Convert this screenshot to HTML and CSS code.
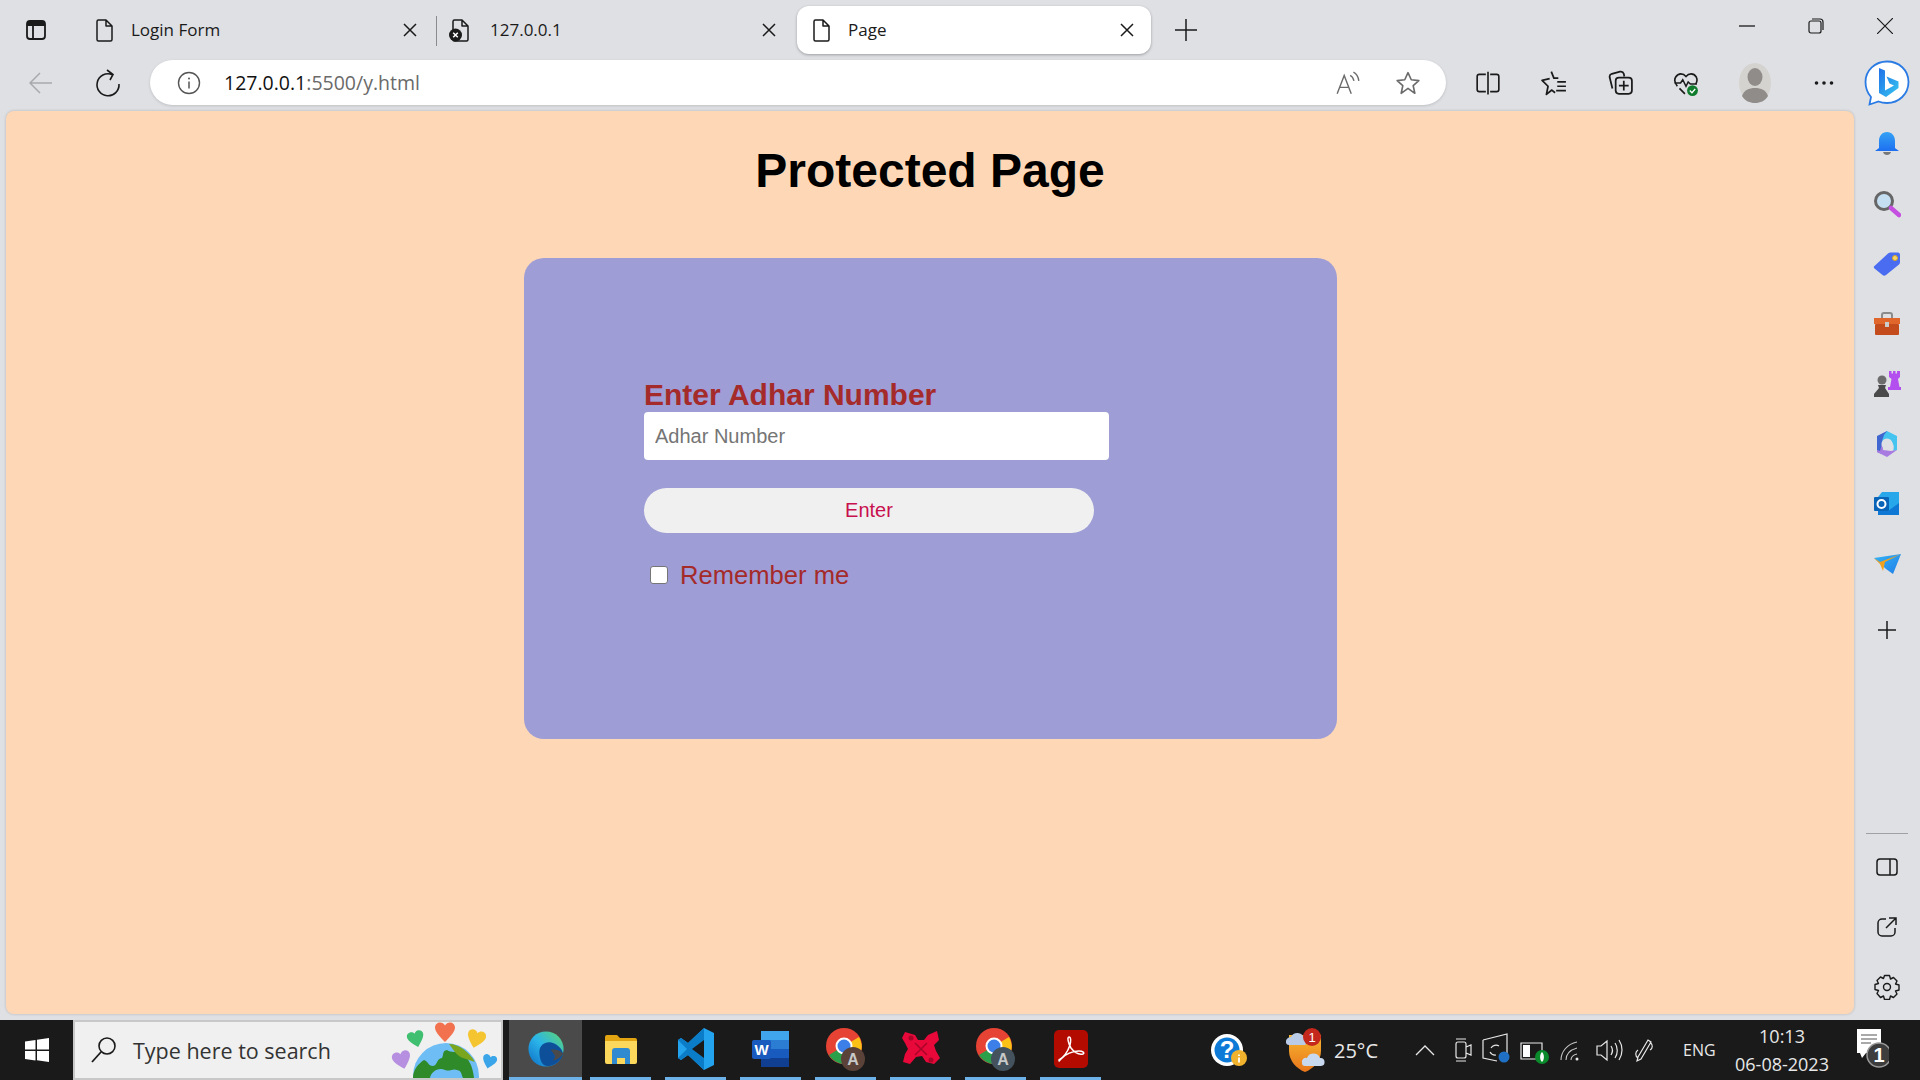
FILE: index.html
```html
<!DOCTYPE html>
<html lang="en">
<head>
    <meta charset="UTF-8">
    <title>Page</title>
    <link rel="stylesheet" href="styles.css">
</head>
<body>
    <svg class="defs" width="0" height="0">
        <defs>
            <symbol id="file" viewBox="0 0 24 24"><path d="M5 3.500A1.500 1.500 0 0 1 6.500 2H14l6 6v13.500a1.500 1.500 0 0 1-1.500 1.500h-12A1.500 1.500 0 0 1 5 21.500zM14 2v6h6" fill="none" stroke="#1a1a1a" stroke-width="1.500" stroke-linejoin="round"/></symbol>
            <symbol id="close" viewBox="0 0 16 16"><path d="M2 2l12 12M14 2L2 14" fill="none" stroke="#1a1a1a" stroke-width="1.500"/></symbol>
            <symbol id="heart" viewBox="0 0 24 24"><path d="M12 22C5 15 2 11 2 7.500 2 4.500 4.500 2.500 7 2.500c2 0 4 1 5 3 1-2 3-3 5-3 2.500 0 5 2 5 5 0 3.500-3 7.500-10 14.500z"/></symbol>
            <linearGradient id="edgeGrad" x1="0" y1="1" x2="1" y2="0"><stop offset="0" stop-color="#0c6cc4"/><stop offset=".5" stop-color="#2bb5ea"/><stop offset="1" stop-color="#5fd66a"/></linearGradient>
            <linearGradient id="bingGrad" x1="0" y1="0" x2="1" y2="1"><stop offset="0" stop-color="#1f6fe8"/><stop offset="1" stop-color="#37c8f0"/></linearGradient>
            <linearGradient id="bellGrad" x1="0" y1="0" x2="0" y2="1"><stop offset="0" stop-color="#35a2f5"/><stop offset="1" stop-color="#1d6ff0"/></linearGradient>
            <linearGradient id="planeGrad" x1="0" y1="0" x2="1" y2="1"><stop offset="0" stop-color="#35b5f5"/><stop offset="1" stop-color="#1f7de8"/></linearGradient>
            <linearGradient id="shieldGrad" x1="0" y1="0" x2="0" y2="1"><stop offset="0" stop-color="#f7b531"/><stop offset="1" stop-color="#e8751a"/></linearGradient>
        </defs>
    </svg>

    <div class="tabbar">
        <div class="win-btn">
            <svg width="24" height="24" viewBox="0 0 24 24"><rect x="3" y="3" width="18" height="18" rx="3" fill="none" stroke="#1a1a1a" stroke-width="1.800"/><path d="M3 6a3 3 0 0 1 3-3h12a3 3 0 0 1 3 3v2H3z" fill="#1a1a1a"/><path d="M9 8v13" stroke="#1a1a1a" stroke-width="1.800"/></svg>
        </div>
        <div class="tab tab-first">
            <svg class="tab-icon"><use href="#file"/></svg>
            <span class="tab-title">Login Form</span>
            <svg class="tab-close"><use href="#close"/></svg>
        </div>
        <div class="tab tab-second">
            <svg class="tab-icon" viewBox="0 0 24 24"><use href="#file" width="24" height="24"/><circle cx="7.500" cy="17" r="6.500" fill="#1a1a1a"/><path d="M5.200 14.700l4.600 4.600M9.800 14.700l-4.600 4.600" stroke="#fff" stroke-width="1.500"/></svg>
            <span class="tab-title">127.0.0.1</span>
            <svg class="tab-close"><use href="#close"/></svg>
        </div>
        <div class="tab tab-active">
            <svg class="tab-icon"><use href="#file"/></svg>
            <span class="tab-title">Page</span>
            <svg class="tab-close"><use href="#close"/></svg>
        </div>
        <svg class="new-tab" width="24" height="24" viewBox="0 0 24 24"><path d="M12 1v22M1 12h22" stroke="#1a1a1a" stroke-width="1.500"/></svg>
        <div class="win-controls">
            <svg width="16" height="16" viewBox="0 0 16 16"><path d="M0 8h16" stroke="#1a1a1a" stroke-width="1.300"/></svg>
            <svg width="16" height="16" viewBox="0 0 16 16"><rect x="1" y="3" width="12" height="12" rx="2" fill="none" stroke="#1a1a1a" stroke-width="1.200"/><path d="M4 1h8a3 3 0 0 1 3 3v8" fill="none" stroke="#1a1a1a" stroke-width="1.200"/></svg>
            <svg width="16" height="16" viewBox="0 0 16 16"><path d="M0 0l16 16M16 0L0 16" stroke="#1a1a1a" stroke-width="1.200"/></svg>
        </div>
    </div>

    <div class="toolbar">
        <svg class="back" width="24" height="24" viewBox="0 0 24 24"><path d="M23 12H1M11 2L1 12l10 10" fill="none" stroke="#a8a9ad" stroke-width="1.500"/></svg>
        <svg class="reload" width="26" height="28" viewBox="0 0 26 28"><path d="M17 5.500A11 11 0 1 0 24 15M12 1l6 4.500-3 5.500" fill="none" stroke="#1a1a1a" stroke-width="1.600"/></svg>
        <div class="address">
            <svg class="info" width="24" height="24" viewBox="0 0 24 24"><circle cx="12" cy="12" r="10.500" fill="none" stroke="#555" stroke-width="1.400"/><path d="M12 10.500v7" stroke="#555" stroke-width="1.500"/><circle cx="12" cy="7.500" r="1" fill="#555"/></svg>
            <span class="url"><b>127.0.0.1</b>:5500/y.html</span>
            <div class="addr-right">
                <svg width="26" height="26" viewBox="0 0 24 24"><path d="M2 22L8.500 5l6.500 17M4.500 16h8M14 5c2 1 3 3 3.500 5M17 2c3 1.500 4.500 4.500 5 8" fill="none" stroke="#6b6b6b" stroke-width="1.300"/></svg>
                <svg width="26" height="26" viewBox="0 0 24 24"><path d="M12 2.500l3 6.500 7 .8-5.200 4.700 1.500 7L12 17l-6.300 4.500 1.500-7L2 9.800 9 9z" fill="none" stroke="#6b6b6b" stroke-width="1.500" stroke-linejoin="round"/></svg>
            </div>
        </div>
        <div class="tool-icons">
            <div class="tool"><svg width="26" height="26" viewBox="0 0 24 24"><path d="M10 4H4a2 2 0 0 0-2 2v12a2 2 0 0 0 2 2h6M14 4h6a2 2 0 0 1 2 2v12a2 2 0 0 1-2 2h-6M12 1.500v21" fill="none" stroke="#1a1a1a" stroke-width="1.500"/></svg></div>
            <div class="tool"><svg width="26" height="26" viewBox="0 0 24 24"><path d="M9.500 1.500l2.400 6h4.100M13 21l-3-2.500-5 4 1.500-7.500L1 9.500l7-1.500" fill="none" stroke="#1a1a1a" stroke-width="1.600" stroke-linejoin="round"/><path d="M15 11h8M15 15h8M14 19h9" stroke="#1a1a1a" stroke-width="1.600"/></svg></div>
            <div class="tool"><svg width="26" height="26" viewBox="0 0 24 24"><path d="M5 17L2.500 7a3 3 0 0 1 2-3.500L12 1.500a3 3 0 0 1 3.500 2L16 6" fill="none" stroke="#1a1a1a" stroke-width="1.600"/><rect x="8" y="7" width="15" height="15" rx="3" fill="none" stroke="#1a1a1a" stroke-width="1.600"/><path d="M15.500 10v9M11 14.500h9" stroke="#1a1a1a" stroke-width="1.600"/></svg></div>
            <div class="tool"><svg width="26" height="26" viewBox="0 0 24 24"><path d="M4 15C1.500 12 1 9 2.500 6.500 5 2.500 9.500 3 12 6c2.500-3 7-3.500 9.500.5 1 2 1 4-.5 6.500M6 17l5 5" fill="none" stroke="#1a1a1a" stroke-width="1.500"/><path d="M1.500 12H7l2-3 3 6 2-4 2 2h6" fill="none" stroke="#1a1a1a" stroke-width="1.400"/><circle cx="18" cy="19" r="5" fill="#0f7b2c"/><path d="M15.500 19l2 2 3-3.500" fill="none" stroke="#fff" stroke-width="1.200"/></svg></div>
            <div class="tool tool-avatar"><svg width="32" height="40" viewBox="0 0 32 40"><ellipse cx="16" cy="20" rx="16" ry="20" fill="#d5d3d0"/><ellipse cx="16" cy="14" rx="7.500" ry="9" fill="#8f8c89"/><path d="M3 33c2-6 7-8 13-8s11 2 13 8c-3 5-8 7-13 7S6 38 3 33z" fill="#8f8c89"/></svg></div>
            <div class="tool"><svg width="20" height="6" viewBox="0 0 20 6"><circle cx="2.500" cy="3" r="1.800" fill="#1a1a1a"/><circle cx="10" cy="3" r="1.800" fill="#1a1a1a"/><circle cx="17.500" cy="3" r="1.800" fill="#1a1a1a"/></svg></div>
            <div class="tool tool-bing"><svg width="46" height="46" viewBox="0 0 46 46"><path d="M23 1.500C11 1.500 1.500 10.500 1.500 22c0 6 2 11 5.500 15l-1.500 7.500 9-3c2.500 1 5.500 1.500 8.500 1.500 12 0 21.500-9 21.500-21S35 1.500 23 1.500z" fill="#fff" stroke="#2a7be4" stroke-width="1.800"/><path d="M15 8l6 2.500v20l9-5-4.500-2-3-7 12 5v6.500L22 37l-7-4z" fill="url(#bingGrad)"/></svg></div>
        </div>
    </div>

    <div class="workspace">
        <main class="page">
            <h1>Protected Page</h1>
            <div class="card">
                <form class="form">
                    <label class="form-label" for="adhar">Enter Adhar Number</label>
                    <input class="form-input" id="adhar" type="text" placeholder="Adhar Number">
                    <button class="form-btn" type="button">Enter</button>
                    <div class="remember">
                        <input class="remember-check" id="remember" type="checkbox">
                        <label class="remember-label" for="remember">Remember me</label>
                    </div>
                </form>
            </div>
        </main>
        <aside class="sidebar">
            <div class="side-top">
                <div class="side-item"><svg width="28" height="28" viewBox="0 0 28 28"><path d="M14 2c5 0 8 4 8 9v7l4 3H2l4-3v-7c0-5 3-9 8-9z" fill="url(#bellGrad)"/><path d="M10 22h8c-1 4-7 4-8 0z" fill="#777"/></svg></div>
                <div class="side-item"><svg width="28" height="28" viewBox="0 0 28 28"><circle cx="11" cy="11" r="8.500" fill="#c5dff2" stroke="#666" stroke-width="3"/><path d="M18 18l8 7" stroke="#c54fe0" stroke-width="4.500" stroke-linecap="round"/></svg></div>
                <div class="side-item"><svg width="28" height="26" viewBox="0 0 28 26"><path d="M1.500 15L15 2.500c1-1 2-1 3-1h7c1 0 2 1 2 2v7c0 1 0 2-1 3L13 24c-1 1-2.500 1-3.500 0l-8-6.500c-1-1-1-2 0-2.500z" fill="#4a6cf0"/><circle cx="22" cy="7" r="2.500" fill="#f5d76e" stroke="#d8a520" stroke-width="1"/></svg></div>
                <div class="side-item"><svg width="28" height="24" viewBox="0 0 28 24"><path d="M9 6V3a2 2 0 0 1 2-2h6a2 2 0 0 1 2 2v3" fill="none" stroke="#8b8b8b" stroke-width="2"/><rect x="1" y="6" width="26" height="6" fill="#e0662c"/><rect x="2" y="12" width="24" height="11" rx="1" fill="#c44b1c"/><rect x="12" y="10" width="4" height="5" fill="#ccc"/></svg></div>
                <div class="side-item"><svg width="28" height="28" viewBox="0 0 28 28"><path d="M16 1h2.500v2.500H20V1h2.500v2.500H24V1h3v6l-2 2 1.500 8h2v3H15v-3h2l1.500-8-2.500-2z" fill="#b44fef"/><circle cx="9" cy="10" r="4.500" fill="#6c6c6c"/><path d="M5 15h8l-1 3 4 6v3H1v-3l5-6z" fill="#4a4a4a"/></svg></div>
                <div class="side-item"><svg width="26" height="28" viewBox="0 0 26 28"><path d="M13 1L3 6v16l5 2 1-12c0-4 2-6 4-6z" fill="#3f67cf"/><path d="M13 1l10 5v14l-4 1c2-5 0-10-6-12L8 11l2-6z" fill="#45c4f0"/><path d="M8 14l1 6 8 1 6-1-10 7-10-5v-2l3 1z" fill="#a87be0"/><path d="M13 8.500a5.500 5.500 0 1 1-.01 0z" fill="#dfe0e4"/></svg></div>
                <div class="side-item"><svg width="26" height="26" viewBox="0 0 26 26"><path d="M8 1h17v23H4V6z" fill="#28a8ea"/><path d="M4 14l10 6 11-8v12H4z" fill="#0f78d4"/><rect x="0" y="6" width="15" height="14" rx="1" fill="#0a64b8"/><circle cx="7.500" cy="13" r="4" fill="none" stroke="#fff" stroke-width="2"/></svg></div>
                <div class="side-item"><svg width="28" height="22" viewBox="0 0 28 22"><path d="M1 5l27-4-8 20-7-5z" fill="url(#planeGrad)"/><path d="M1 5l6 4 21-8-16 8-2 9-3-7z" fill="#f0a21e"/></svg></div>
                <div class="side-item side-plus"><svg width="20" height="20" viewBox="0 0 20 20"><path d="M10 1v18M1 10h18" stroke="#1a1a1a" stroke-width="1.500"/></svg></div>
            </div>
            <div class="side-bottom">
                <div class="side-divider"></div>
                <div class="side-item"><svg width="24" height="24" viewBox="0 0 24 24"><rect x="2" y="4" width="20" height="16" rx="3" fill="none" stroke="#1a1a1a" stroke-width="1.500"/><path d="M15 4v16" stroke="#1a1a1a" stroke-width="1.500"/></svg></div>
                <div class="side-item"><svg width="24" height="24" viewBox="0 0 24 24"><path d="M11 4H7a4 4 0 0 0-4 4v9a4 4 0 0 0 4 4h9a4 4 0 0 0 4-4v-4M14 3h7v7M21 3L11 13" fill="none" stroke="#1a1a1a" stroke-width="1.500"/></svg></div>
                <div class="side-item"><svg width="26" height="26" viewBox="0 0 26 26"><path d="M10.500 1.500h5l1 3.500 3-1.500 3.500 3.500-1.500 3 3.500 1v5l-3.500 1 1.500 3-3.500 3.500-3-1.500-1 3.500h-5l-1-3.500-3 1.500L3 19.500l1.500-3-3.500-1v-5l3.500-1-1.500-3L6.500 3l3 1.500z" fill="none" stroke="#1a1a1a" stroke-width="1.400" stroke-linejoin="round"/><circle cx="13" cy="13" r="3.500" fill="none" stroke="#1a1a1a" stroke-width="1.400"/></svg></div>
            </div>
        </aside>
    </div>

    <footer class="taskbar">
        <div class="start"><svg width="26" height="26" viewBox="0 0 26 26"><path d="M1 4.500l10.500-1.500v9.500H1zM13 2.800L25 1v11.500H13zM1 14h10.500v9.500L1 22zM13 14h12v11l-12-1.800z" fill="#fff"/></svg></div>
        <div class="search">
            <svg width="26" height="28" viewBox="0 0 26 28"><circle cx="16" cy="10" r="8" fill="none" stroke="#1a1a1a" stroke-width="1.600"/><path d="M10 16L1 26" stroke="#1a1a1a" stroke-width="1.800"/></svg>
            <span class="search-text">Type here to search</span>
            <svg class="search-art" width="110" height="56" viewBox="0 2 110 56">
                <use href="#heart" x="42" y="0" width="24" height="24" fill="#f2724f"/>
                <use href="#heart" x="15" y="9" width="20" height="20" fill="#3fbf6f" transform="rotate(-15 25 19)"/>
                <use href="#heart" x="74" y="8" width="22" height="22" fill="#f5c531" transform="rotate(15 85 19)"/>
                <use href="#heart" x="0" y="28" width="22" height="24" fill="#b78fe0" transform="rotate(-15 11 40)"/>
                <use href="#heart" x="90" y="33" width="17" height="17" fill="#3aa5e8" transform="rotate(15 98 41)"/>
                <circle cx="55" cy="56" r="33" fill="#6fbdf5"/>
                <path d="M22 58c0-8 5-14 11-18 5 2 4 6 9 6 5-1 3-7 9-8 2-4 0-7 5-8 4 3 10 1 14 3 8 5 12 14 13 25H72c-2-4-1-7-6-8-4-2-7 2-12 0-7-3-14 2-15 8z" fill="#2f8a2a"/>
                <path d="M58 24c10 0 20 8 26 18l-12-4c-6-2-8-6-14-14z" fill="#7aa51e"/>
            </svg>
        </div>
        <div class="apps">
            <div class="app app-current"><svg width="38" height="38" viewBox="0 0 40 40"><circle cx="20" cy="20" r="18.500" fill="url(#edgeGrad)"/><path d="M13 23c0-8 8-12 15-9 5 2 9 6 10 11-2 8-9 13-17 13-6 0-8-9-8-15z" fill="#0e4f9a"/><path d="M25 21c4-1 9 0 13 4-3 4-7 7-11 7 3-2 3-5 1-7-1-2-2-3-3-4z" fill="#4a4a4a"/></svg></div>
            <div class="app"><svg width="34" height="32" viewBox="0 0 34 32"><path d="M1 4a2 2 0 0 1 2-2h10l3 3h15a2 2 0 0 1 2 2v3H1z" fill="#e2a410"/><path d="M1 8h32v21a2 2 0 0 1-2 2H3a2 2 0 0 1-2-2z" fill="#fbd75c"/><path d="M8 31V18a3 3 0 0 1 3-3h12a3 3 0 0 1 3 3v13h-5v-6h-8v6z" fill="#2f8ad0"/></svg></div>
            <div class="app"><svg width="36" height="44" viewBox="0 0 36 44"><path d="M26 1l10 5v32l-10 5-16-15-7 5-3-2V13l3-2 7 5z" fill="#23a3ee"/><path d="M26 1v42L10 28l-7 5-3-2 9-9-9-9 3-2 7 5z" fill="#0b7cc8"/><path d="M26 13L14 22l12 9z" fill="#1a1a1a"/></svg></div>
            <div class="app"><svg width="38" height="38" viewBox="0 0 38 38"><rect x="9" y="1" width="28" height="36" rx="2" fill="#2b7cd3"/><rect x="9" y="1" width="28" height="9" fill="#41a5ee"/><rect x="9" y="19" width="28" height="9" fill="#185abd"/><rect x="9" y="28" width="28" height="9" fill="#103f91"/><rect x="0" y="10" width="19" height="19" rx="2" fill="#185abd"/><text class="app-letter" x="9.500" y="25" text-anchor="middle">W</text></svg></div>
            <div class="app"><svg width="40" height="48" viewBox="0 0 40 48"><circle cx="18" cy="21" r="18" fill="#e74335"/><path d="M18 21L3 30a18 18 0 0 0 21 8z" fill="#2b9f4a"/><path d="M18 21l15-9a18 18 0 0 1-8 26z" fill="#fbc116"/><circle cx="18" cy="21" r="8.500" fill="#fff"/><circle cx="18" cy="21" r="6.500" fill="#3c7fe8"/><circle cx="27" cy="34" r="12" fill="#5a4238"/><text class="app-badge" x="27" y="40" text-anchor="middle">A</text></svg></div>
            <div class="app"><svg width="38" height="40" viewBox="0 0 38 40"><path d="M3 3l10 3 3 5 6 0 4-5 9-4 2 9-5 5 2 6 4 7-6 6-8-2-4-6-6 1-6 7-7-2 2-8 3-5-3-6-3-5z" fill="#e8083a"/><path d="M13 14l12 12M25 14L13 26" stroke="#a80528" stroke-width="1.500"/><circle cx="9" cy="9" r="2.500" fill="#a80528"/><circle cx="29" cy="31" r="2.500" fill="#a80528"/></svg></div>
            <div class="app"><svg width="40" height="48" viewBox="0 0 40 48"><circle cx="18" cy="21" r="18" fill="#e74335"/><path d="M18 21L3 30a18 18 0 0 0 21 8z" fill="#2b9f4a"/><path d="M18 21l15-9a18 18 0 0 1-8 26z" fill="#fbc116"/><circle cx="18" cy="21" r="8.500" fill="#fff"/><circle cx="18" cy="21" r="6.500" fill="#3c7fe8"/><circle cx="27" cy="34" r="12" fill="#43525c"/><text class="app-badge" x="27" y="40" text-anchor="middle">A</text></svg></div>
            <div class="app"><svg width="34" height="38" viewBox="0 0 34 38"><rect width="34" height="38" rx="5" fill="#b30b00"/><path d="M5 30c5-3 9-9 11-15 1-4 1-8-1-8s-1 6 2 11c3 4 7 7 12 6 2-1 0-3-4-3-6 0-14 3-18 8-2 2-2 3-2 1z" fill="none" stroke="#fff" stroke-width="1.500"/></svg></div>
        </div>
        <div class="help"><svg width="40" height="42" viewBox="0 0 40 42"><circle cx="17" cy="21" r="16" fill="#fff"/><circle cx="17" cy="21" r="12.500" fill="#0d7ad8"/><text class="help-mark" x="17" y="29" text-anchor="middle">?</text><circle cx="29" cy="29" r="8" fill="#f1b32e"/><path d="M29 25.500v1.500M29 28.500v5" stroke="#fff" stroke-width="1.800"/></svg></div>
        <div class="weather"><svg width="42" height="46" viewBox="0 0 42 46"><path d="M3 8h32v16c0 10-8 18-16 21C11 42 3 34 3 24z" fill="url(#shieldGrad)"/><path d="M0 16a5 5 0 0 1 5-6 7 7 0 0 1 13 1 4 4 0 0 1 1 7H3a3 3 0 0 1-3-2z" fill="#b9cbe6"/><path d="M16 36a4 4 0 0 1 5-5 7 7 0 0 1 13 0 4 4 0 0 1 1 8H19a3 3 0 0 1-3-3z" fill="#c8d8ef"/><circle cx="26" cy="10" r="9" fill="#c4281c"/><text class="weather-count" x="26" y="15" text-anchor="middle">1</text></svg></div>
        <span class="temp">25°C</span>
        <svg class="tray" width="253" height="60" viewBox="0 0 253 60">
            <path d="M4 35l9-9 9 9" fill="none" stroke="#e8e8e8" stroke-width="1.300"/>
            <path d="M44 24v12a2 2 0 0 0 2 2h6a2 2 0 0 0 2-2V24a2 2 0 0 0-2-2h-6a2 2 0 0 0-2 2zM54 27l5-2v10l-5-2M44 19h10M44 41h10" fill="none" stroke="#e8e8e8" stroke-width="1.200"/>
            <path d="M71 20l24-6v21h-6M71 20v18l14 3M79 28a6 6 0 0 1 8-2M84 35a6 6 0 0 1-6-3" fill="none" stroke="#e8e8e8" stroke-width="1.200"/>
            <circle cx="92" cy="37" r="5.500" fill="#1f6fc4"/>
            <path d="M109 23h21v16h-21z" fill="none" stroke="#e8e8e8" stroke-width="1.200"/>
            <rect x="111" y="25" width="7" height="12" fill="#fff"/>
            <circle cx="130" cy="37" r="7" fill="#0a8a2a"/>
            <path d="M130 32c2.500 2 2.500 8 0 10-2.500-2-2.500-8 0-10z" fill="#fff"/>
            <path d="M149 40c0-8 6-16 16-18M154 40c0-6 4-10 11-12M159 40c0-3 2-5 6-6" fill="none" stroke="#c8c8c8" stroke-width="1.100"/>
            <circle cx="165" cy="39" r="1.500" fill="#e8e8e8"/>
            <path d="M185 26h4l6-5v19l-6-5h-4zM199 26c2 3 2 6 0 9M203 23c3 4 3 11 0 15M207 20c4 6 4 14 0 20" fill="none" stroke="#e8e8e8" stroke-width="1.200"/>
            <path d="M227 40l-2 1 1-4 10-17 3 2-10 17zM238 22c3 3 3 6 0 8M226 30c-3 2-3 6 0 8" fill="none" stroke="#e8e8e8" stroke-width="1.200"/>
        </svg>
        <span class="lang">ENG</span>
        <div class="clock"><span>10:13</span><span>06-08-2023</span></div>
        <div class="notify"><svg width="40" height="48" viewBox="0 0 40 48"><path d="M8 3h24v24h-15l-4 5-2-5H8z" fill="#fff"/><path d="M12 9h16M12 13h16M12 17h10" stroke="#555" stroke-width="1.200"/><circle cx="30" cy="29" r="12" fill="#3d3d3d" stroke="#9a9a9a" stroke-width="1.500"/><text class="notify-count" x="30" y="36" text-anchor="middle">1</text></svg></div>
    </footer>
</body>
</html>
```

FILE: styles.css
```css
*{
    margin: 0;
    padding: 0;
    box-sizing: border-box;
}
body{
    display: flex;
    flex-direction: column;
    width: 1920px;
    height: 1080px;
    overflow: hidden;
    background: #dfe0e4;
    font-family: "Open Sans", "Liberation Sans", sans-serif;
    color: #1a1a1a;
}
.defs{
    position: absolute;
}

/* tabs */
.tabbar{
    display: flex;
    align-items: center;
    height: 60px;
    flex-shrink: 0;
}
.win-btn{
    display: flex;
    justify-content: center;
    align-items: center;
    width: 72px;
    height: 48px;
    margin-right: 8px;
}
.tab{
    display: flex;
    align-items: center;
    gap: 15px;
    width: 354px;
    height: 48px;
    padding: 0 16px 0 12px;
    font-size: 17px;
}
.tab-first{
    width: 356px;
    padding-right: 18px;
}
.tab-second{
    gap: 18px;
    padding-right: 13px;
    margin-right: 7px;
    position: relative;
}
.tab-second::before{
    content: "";
    position: absolute;
    left: 0;
    top: 10px;
    width: 1px;
    height: 30px;
    background: #8a8b8f;
}
.tab-active{
    background: #fff;
    border-radius: 12px;
    box-shadow: 0 1px 3px rgba(0, 0, 0, .3);
}
.tab-icon{
    width: 24px;
    height: 24px;
    flex-shrink: 0;
}
.tab-title{
    flex: 1;
    padding-bottom: 2px;
}
.tab-close{
    width: 16px;
    height: 16px;
    flex-shrink: 0;
}
.new-tab{
    margin-left: 23px;
}
.win-controls{
    display: flex;
    gap: 53px;
    margin-left: auto;
    margin-right: 27px;
    margin-top: -8px;
}

/* address row */
.toolbar{
    display: flex;
    align-items: center;
    height: 51px;
    padding-bottom: 6px;
    flex-shrink: 0;
}
.back{
    margin-left: 29px;
}
.reload{
    margin-left: 42px;
}
.address{
    display: flex;
    align-items: center;
    width: 1296px;
    height: 45px;
    margin-left: 29px;
    padding: 0 25px 0 27px;
    background: #fff;
    border-radius: 23px;
    box-shadow: 0 1px 3px rgba(0, 0, 0, .15);
}
.url{
    margin-left: 23px;
    font-size: 19.500px;
    color: #6a6a6a;
}
.url b{
    font-weight: 400;
    color: #111;
}
.addr-right{
    display: flex;
    gap: 34px;
    margin-left: auto;
}
.tool-icons{
    display: flex;
    align-items: center;
    margin-left: 9px;
}
.tool{
    display: flex;
    justify-content: center;
    align-items: center;
    width: 66px;
    height: 45px;
}
.tool-avatar{
    width: 72px;
}
.tool-bing{
    width: 60px;
}

/* page */
.workspace{
    display: flex;
    flex: 1;
    min-height: 0;
}
.page{
    width: 1848px;
    margin: 0 0 6px 6px;
    background: #fed8b6;
    border-radius: 8px;
    box-shadow: 0 0 3px rgba(0, 0, 0, .2);
}
h1{
    margin: 32px 0 60px;
    font-family: "Liberation Sans", Arial, sans-serif;
    font-size: 48px;
    line-height: 55px;
    font-weight: 700;
    text-align: center;
    color: #000;
}
.card{
    width: 813px;
    height: 481px;
    margin-left: 518px;
    padding: 120px 0 0 120px;
    background: #9e9dd6;
    border-radius: 20px;
}
.form{
    font-family: "Liberation Sans", Arial, sans-serif;
}
.form-label{
    display: block;
    font-size: 30px;
    line-height: 34px;
    font-weight: 700;
    color: #a52a2a;
}
.form-input{
    display: block;
    width: 465px;
    height: 48px;
    padding: 0 11px;
    border: none;
    border-radius: 4px;
    background: #fff;
    font-family: inherit;
    font-size: 20px;
}
.form-input::placeholder{
    color: #757575;
}
.form-btn{
    display: block;
    width: 450px;
    height: 45px;
    margin-top: 28px;
    border: none;
    border-radius: 23px;
    background: #f0f0f0;
    font-family: inherit;
    font-size: 20px;
    color: #c8104e;
}
.remember{
    display: flex;
    align-items: center;
    gap: 12px;
    margin: 26px 0 0 6px;
    font-size: 25.600px;
    line-height: 30px;
    color: #a52a2a;
}
.remember-check{
    appearance: none;
    width: 18px;
    height: 18px;
    margin: 0;
    background: #fff;
    border: 1.500px solid #767676;
    border-radius: 3px;
}
.remember-label{
    padding-top: 1px;
}

/* right rail */
.sidebar{
    display: flex;
    flex-direction: column;
    justify-content: space-between;
    width: 66px;
    padding: 3px 0;
}
.side-item{
    display: flex;
    justify-content: center;
    align-items: center;
    height: 60px;
}
.side-plus{
    margin-top: 6px;
}
.side-divider{
    width: 42px;
    height: 1px;
    margin: 0 0 3px 12px;
    background: #a0a1a5;
}

/* windows taskbar */
.taskbar{
    display: flex;
    align-items: center;
    height: 60px;
    flex-shrink: 0;
    background: #1a1a1a;
    color: #e8e8e8;
}
.start{
    display: flex;
    justify-content: center;
    align-items: center;
    width: 73px;
}
.search{
    display: flex;
    align-items: center;
    width: 430px;
    height: 60px;
    padding-left: 16px;
    border: 2px solid #c8c8c8;
    background: #f0f0f0;
    overflow: hidden;
}
.search-text{
    margin-left: 16px;
    font-size: 21.500px;
    color: #333;
}
.search-art{
    margin-left: auto;
    flex-shrink: 0;
}
.apps{
    display: flex;
    gap: 14px;
    margin-left: 6px;
}
.app{
    display: flex;
    justify-content: center;
    align-items: center;
    width: 61px;
    height: 60px;
    padding-top: 1px;
    border-bottom: 3px solid #6cb2e8;
}
.app-current{
    width: 73px;
    margin-right: -6px;
    background: #4a4a4a;
}
.app-letter{
    font-family: "Liberation Sans", Arial, sans-serif;
    font-size: 15px;
    font-weight: 700;
    fill: #fff;
}
.app-badge{
    font-family: "Liberation Sans", Arial, sans-serif;
    font-size: 16px;
    font-weight: 700;
    fill: #c8c8c8;
}
.help{
    margin-left: 109px;
    width: 40px;
    height: 42px;
}
.help-mark{
    font-family: "Liberation Sans", Arial, sans-serif;
    font-size: 24px;
    font-weight: 700;
    fill: #fff;
}
.weather{
    margin-left: 36px;
    width: 42px;
    height: 46px;
}
.weather-count{
    font-family: "Liberation Sans", Arial, sans-serif;
    font-size: 13px;
    fill: #fff;
}
.temp{
    width: 78px;
    margin-left: 6px;
    font-size: 20px;
}
.tray{
    flex-shrink: 0;
}
.lang{
    width: 34px;
    margin-left: 18px;
    font-size: 16px;
}
.clock{
    display: flex;
    flex-direction: column;
    align-items: center;
    gap: 4px;
    width: 100px;
    margin-left: 15px;
    font-size: 18px;
    line-height: 24px;
}
.notify{
    width: 40px;
    height: 48px;
    margin-left: 17px;
}
.notify-count{
    font-family: "Liberation Sans", Arial, sans-serif;
    font-size: 20px;
    font-weight: 700;
    fill: #fff;
}
```
